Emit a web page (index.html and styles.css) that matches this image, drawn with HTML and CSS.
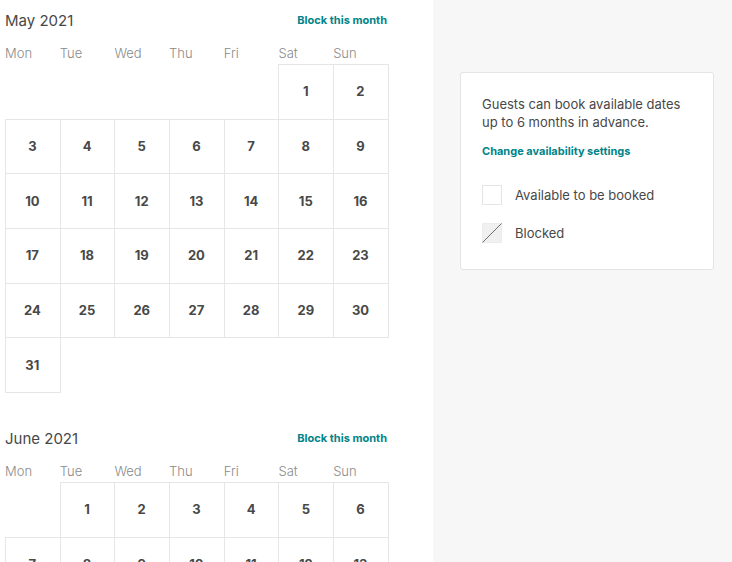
FILE: index.html
```
<!DOCTYPE html>
<html>
<head>
<meta charset="utf-8">
<link rel="stylesheet" href="styles.css">
</head>
<body>
<div class="page">
  <div class="calendars">
    <section class="month">
      <div class="month-head"><span class="month-title">May 2021</span><a class="block-link">Block this month</a></div>
      <div class="weekdays"><span>Mon</span><span>Tue</span><span>Wed</span><span>Thu</span><span>Fri</span><span>Sat</span><span>Sun</span></div>
      <div class="days">
        <span class="empty"></span><span class="empty"></span><span class="empty"></span><span class="empty"></span><span class="empty"></span>
        <span class="day">1</span><span class="day">2</span>
        <span class="day">3</span><span class="day">4</span><span class="day">5</span><span class="day">6</span><span class="day">7</span><span class="day">8</span><span class="day">9</span>
        <span class="day">10</span><span class="day">11</span><span class="day">12</span><span class="day">13</span><span class="day">14</span><span class="day">15</span><span class="day">16</span>
        <span class="day">17</span><span class="day">18</span><span class="day">19</span><span class="day">20</span><span class="day">21</span><span class="day">22</span><span class="day">23</span>
        <span class="day">24</span><span class="day">25</span><span class="day">26</span><span class="day">27</span><span class="day">28</span><span class="day">29</span><span class="day">30</span>
        <span class="day">31</span>
      </div>
    </section>
    <section class="month">
      <div class="month-head"><span class="month-title">June 2021</span><a class="block-link">Block this month</a></div>
      <div class="weekdays"><span>Mon</span><span>Tue</span><span>Wed</span><span>Thu</span><span>Fri</span><span>Sat</span><span>Sun</span></div>
      <div class="days">
        <span class="empty"></span>
        <span class="day">1</span><span class="day">2</span><span class="day">3</span><span class="day">4</span><span class="day">5</span><span class="day">6</span>
        <span class="day">7</span><span class="day">8</span><span class="day">9</span><span class="day">10</span><span class="day">11</span><span class="day">12</span><span class="day">13</span>
        <span class="day">14</span><span class="day">15</span><span class="day">16</span><span class="day">17</span><span class="day">18</span><span class="day">19</span><span class="day">20</span>
      </div>
    </section>
  </div>
  <aside class="side">
    <div class="card">
      <p class="info">Guests can book available dates up to 6 months in advance.</p>
      <a class="settings-link">Change availability settings</a>
      <ul class="legend">
        <li><span class="swatch"></span>Available to be booked</li>
        <li><span class="swatch blocked"><svg viewBox="0 0 20 20" width="20" height="20"><line x1="0.5" y1="19.5" x2="19.5" y2="0.5" stroke="#6f6f6f" stroke-width="1"/></svg></span>Blocked</li>
      </ul>
    </div>
  </aside>
</div>
</body>
</html>
```
FILE: styles.css
```
html, body {
  margin: 0;
  padding: 0;
  height: 100%;
  overflow: hidden;
}
body {
  font-family: Inter, "Noto Sans", sans-serif;
  color: #484848;
  background: #fff;
}
.page {
  display: flex;
  height: 562px;
}
.calendars {
  width: 433px;
  flex: none;
  padding: 10px 0 0 5px;
  box-sizing: border-box;
}
.month + .month {
  margin-top: 36px;
}
.month-head {
  width: 382px;
  height: 20px;
  display: flex;
  justify-content: space-between;
  align-items: center;
}
.month-title {
  font-size: 15px;
  color: #484848;
}
.block-link {
  font-size: 11px;
  font-weight: 700;
  color: #008489;
}
.weekdays {
  margin-top: 13px;
  height: 21px;
  display: grid;
  grid-template-columns: repeat(7, 54.7px);
  font-size: 13px;
  color: #8a8a8a;
  font-weight: 300;
  line-height: 20px;
}
.days {
  display: grid;
  grid-template-columns: repeat(7, 54.7px);
  grid-auto-rows: 54.7px;
}
.day {
  display: flex;
  align-items: center;
  justify-content: center;
  font-size: 13px;
  font-weight: 700;
  color: #484848;
  box-shadow: inset 1px 1px 0 #e6e6e6, 1px 0 0 #e6e6e6, 0 1px 0 #e6e6e6, 1px 1px 0 #e6e6e6;
}
.side {
  flex: 1;
  background: #f7f7f7;
  padding: 72px 18px 0 27px;
}
.card {
  width: 254px;
  box-sizing: border-box;
  background: #fff;
  border: 1px solid #e4e4e4;
  border-radius: 3px;
  padding: 22px 20px 26px 21px;
}
.info {
  margin: 0;
  font-size: 13px;
  line-height: 18px;
  color: #484848;
}
.settings-link {
  display: block;
  margin-top: 13px;
  font-size: 11px;
  font-weight: 700;
  color: #008489;
  line-height: 14px;
}
.legend {
  list-style: none;
  margin: 27px 0 0;
  padding: 0;
}
.legend li {
  display: flex;
  align-items: center;
  gap: 13px;
  font-size: 13px;
  height: 20px;
}
.legend li + li {
  margin-top: 18px;
}
.swatch {
  width: 20px;
  height: 20px;
  box-sizing: border-box;
  border: 1px solid #e4e4e4;
  background: #fff;
  flex: none;
  position: relative;
}
.swatch.blocked {
  background: #f0f0f0;
  border-color: #ececec;
}
.swatch svg {
  position: absolute;
  left: -1px;
  top: -1px;
}
```
